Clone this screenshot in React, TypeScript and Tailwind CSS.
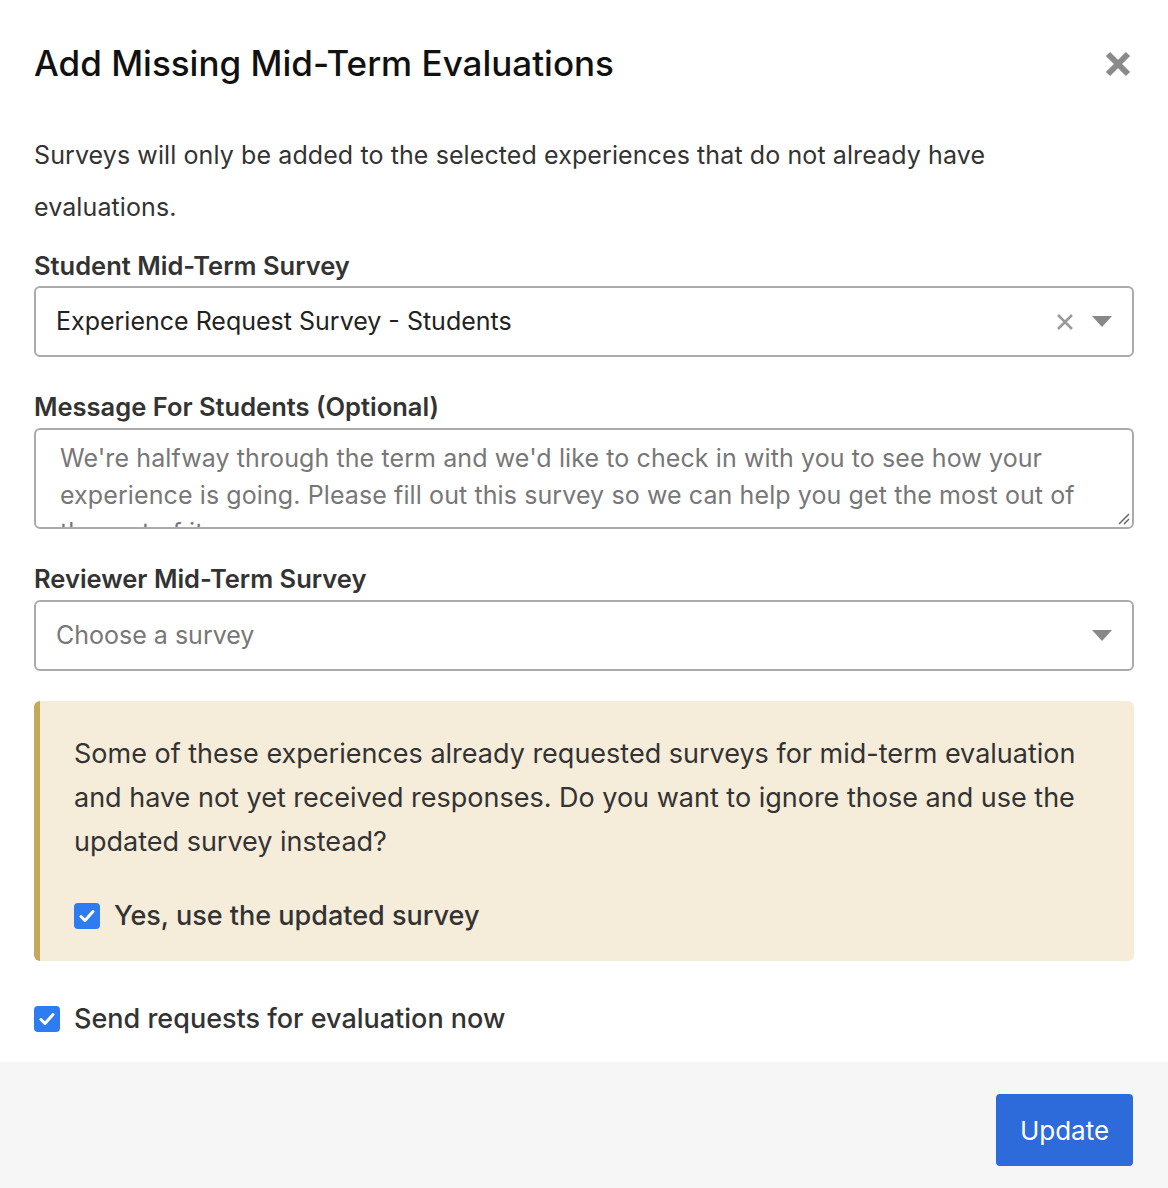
import React from "react";

const Check = () => (
  <span className="w-[26px] h-[26px] rounded-[4px] bg-[#2f7cf0] flex items-center justify-center shrink-0">
    <svg width="18" height="18" viewBox="0 0 18 18"><path d="M3 9.5l4 4 8-9" stroke="white" strokeWidth="3" fill="none" strokeLinecap="round" strokeLinejoin="round"/></svg>
  </span>
);

const Caret = () => (
  <svg width="20" height="12" viewBox="0 0 20 12"><path d="M0 0h20L10 11z" fill="#888"/></svg>
);

export default function App() {
  return (
    <div className="w-[1168px] h-[1188px] bg-white flex flex-col text-[#333]" style={{ fontFamily: "Inter, 'Noto Sans', sans-serif" }}>
      <div className="flex-1 px-[34px]">
        <div className="flex items-center justify-between h-[128px] pb-[2px]">
          <h1 className="text-[35px] font-medium text-[#111]">Add Missing Mid-Term Evaluations</h1>
          <svg width="28" height="28" viewBox="0 0 28 28" className="mr-[2px] mt-[2px]"><path d="M4 4L24 24M24 4L4 24" stroke="#8a8a8a" strokeWidth="6"/></svg>
        </div>
        <p className="text-[25px] leading-[52px] text-[#333] mt-[1px] tracking-[0.1px]">Surveys will only be added to the selected experiences that do not already have evaluations.</p>
        <div className="mt-[16px] text-[25.5px] font-semibold text-[#333] leading-[34px]">Student Mid-Term Survey</div>
        <div className="mt-[3px] h-[71px] border-2 border-[#ababab] rounded-[6px] flex items-center pl-[20px] pr-[20px]">
          <span className="text-[25px] flex-1 text-[#222]">Experience Request Survey - Students</span>
          <svg width="18" height="18" viewBox="0 0 18 18" className="mr-[18px]"><path d="M2 2L16 16M16 2L2 16" stroke="#999" strokeWidth="2.5"/></svg>
          <Caret />
        </div>
        <div className="mt-[33px] text-[25.5px] font-semibold leading-[34px]">Message For Students (Optional)</div>
        <div className="mt-[4px] h-[101px] border-2 border-[#ababab] rounded-[6px] overflow-hidden relative px-[24px] pt-[10px]">
          <p className="text-[25px] leading-[37px] text-[#777] tracking-[0.1px]">We're halfway through the term and we'd like to check in with you to see how your experience is going. Please fill out this survey so we can help you get the most out of the rest of it.</p>
          <svg width="14" height="14" viewBox="0 0 14 14" className="absolute right-[2px] bottom-[2px]"><path d="M13 3L3 13M13 8L8 13" stroke="#666" strokeWidth="1.5"/></svg>
        </div>
        <div className="mt-[33px] text-[25.5px] font-semibold leading-[34px]">Reviewer Mid-Term Survey</div>
        <div className="mt-[4px] h-[71px] border-2 border-[#ababab] rounded-[6px] flex items-center pl-[20px] pr-[20px]">
          <span className="text-[25px] flex-1 text-[#777]">Choose a survey</span>
          <Caret />
        </div>
        <div className="mt-[30px] h-[260px] bg-[#f6ecda] border-l-[6px] border-[#c6a85a] rounded-[6px] pl-[34px] pr-[40px] pt-[31px]">
          <p className="text-[27px] leading-[44px] text-[#333]">Some of these experiences already requested surveys for mid-term evaluation and have not yet received responses. Do you want to ignore those and use the updated survey instead?</p>
          <div className="flex items-center gap-[14px] mt-[32px]">
            <Check />
            <span className="text-[27px] font-medium">Yes, use the updated survey</span>
          </div>
        </div>
        <div className="flex items-center gap-[14px] mt-[38px]">
          <Check />
          <span className="text-[27px] font-medium">Send requests for evaluation now</span>
        </div>
      </div>
      <div className="h-[126px] bg-[#f6f6f6] flex items-start justify-end pr-[35px] pt-[32px]">
        <button className="w-[137px] h-[72px] bg-[#2c6bd9] text-white text-[26px] rounded-[4px]">Update</button>
      </div>
    </div>
  );
}
